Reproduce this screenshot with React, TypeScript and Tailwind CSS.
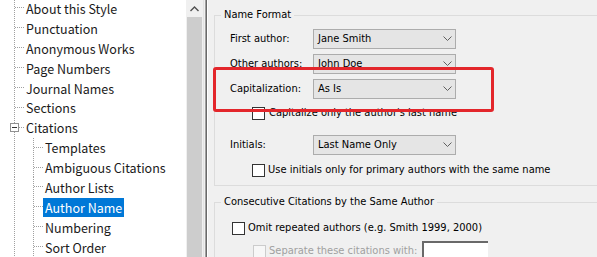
import React from "react";

const treeFont = { fontFamily: '"Noto Sans CJK SC", "Open Sans", sans-serif' };
const uiFont = { fontFamily: '"DejaVu Sans Condensed", "DejaVu Sans", Tahoma, sans-serif' };

type Node = { label: string; level: 0 | 1; expander?: boolean; selected?: boolean };

const nodes: Node[] = [
  { label: "About this Style", level: 0 },
  { label: "Punctuation", level: 0 },
  { label: "Anonymous Works", level: 0 },
  { label: "Page Numbers", level: 0 },
  { label: "Journal Names", level: 0 },
  { label: "Sections", level: 0 },
  { label: "Citations", level: 0, expander: true },
  { label: "Templates", level: 1 },
  { label: "Ambiguous Citations", level: 1 },
  { label: "Author Lists", level: 1 },
  { label: "Author Name", level: 1, selected: true },
  { label: "Numbering", level: 1 },
  { label: "Sort Order", level: 1 },
];

const Connector = ({ node }: { node: Node }) => {
  const w = node.level === 0 ? 24 : 43;
  return (
    <svg width={w} height={20} className="shrink-0" shapeRendering="crispEdges">
      <line x1={14.5} y1={0} x2={14.5} y2={20} stroke="#a0a0a0" strokeDasharray="1 1" />
      {node.level === 0 && (
        <line x1={node.expander ? 19 : 15} y1={9.5} x2={25} y2={9.5} stroke="#a0a0a0" strokeDasharray="1 1" />
      )}
      {node.level === 1 && (
        <>
          <line x1={33.5} y1={0} x2={33.5} y2={20} stroke="#a0a0a0" strokeDasharray="1 1" />
          <line x1={34} y1={9.5} x2={43} y2={9.5} stroke="#a0a0a0" strokeDasharray="1 1" />
        </>
      )}
      {node.expander && (
        <>
          <rect x={10.5} y={5.5} width={8} height={8} fill="#fff" stroke="#919191" />
          <line x1={12} y1={9.5} x2={17} y2={9.5} stroke="#333" />
        </>
      )}
    </svg>
  );
};

const Dropdown = ({ value }: { value: string }) => (
  <div className="flex h-[20px] w-[143px] items-center justify-between border border-[#acacac] bg-[#e5e5e5] pl-[4px] pr-[3px] text-[11px] text-black">
    <span>{value}</span>
    <svg width="9" height="6" viewBox="0 0 9 6">
      <path d="M0.5 0.5 L4.5 4.5 L8.5 0.5" fill="none" stroke="#606060" strokeWidth="1" />
    </svg>
  </div>
);

const Checkbox = ({ disabled }: { disabled?: boolean }) => (
  <span
    className={`inline-block h-[13px] w-[13px] shrink-0 border ${disabled ? "border-[#cccccc] bg-[#f7f7f7]" : "border-[#333333] bg-white"}`}
  />
);

const FieldRow = ({ label, value }: { label: string; value: string }) => (
  <div className="flex items-center">
    <span className="w-[83px] text-[11px] text-black">{label}</span>
    <Dropdown value={value} />
  </div>
);

export default function App() {
  return (
    <div className="flex h-[257px] w-[597px] overflow-hidden bg-[#f0f0f0]">
      {/* tree */}
      <div className="w-[186px] shrink-0 overflow-hidden bg-white text-[12.5px] text-[#1a1a1a]" style={treeFont}>
        <div className="-mt-[1.5px]">
          {nodes.map((n) => (
            <div key={n.label} className="flex h-[19.9px] items-center">
              <Connector node={n} />
              <span
                className={`whitespace-nowrap px-[2px] leading-[19px] ${n.selected ? "bg-[#0078d7] text-white" : ""}`}
              >
                {n.label}
              </span>
            </div>
          ))}
        </div>
      </div>

      {/* scrollbar */}
      <div className="flex w-[17px] shrink-0 flex-col bg-[#f0f0f0]">
        <div className="flex h-[17px] items-center justify-center">
          <svg width="9" height="6" viewBox="0 0 9 6">
            <path d="M0.5 5 L4.5 1 L8.5 5" fill="none" stroke="#505050" strokeWidth="1.4" />
          </svg>
        </div>
        <div className="mx-[1px] flex-1 bg-[#cdcdcd]" />
      </div>

      {/* splitter */}
      <div className="flex w-[5px] shrink-0">
        <div className="w-[1px] bg-[#e3e3e3]" />
        <div className="w-[1px] bg-[#f0f0f0]" />
        <div className="w-[1px] bg-[#a0a0a0]" />
        <div className="w-[1px] bg-[#696969]" />
        <div className="w-[1px] bg-white" />
      </div>

      {/* settings */}
      <div className="relative flex-1 bg-[#f0f0f0] text-[11px] text-black" style={uiFont}>
        <fieldset className="ml-[6px] mt-[8px] w-[420px] border border-[#dcdcdc] pb-[8px] pl-[15px]">
          <legend className="-ml-[9px] px-[3px] leading-[14px]">Name Format</legend>
          <div className="mt-[7px] flex flex-col gap-[5px]">
            <FieldRow label="First author:" value="Jane Smith" />
            <FieldRow label="Other authors:" value="John Doe" />
            <FieldRow label="Capitalization:" value="As Is" />
          </div>
          <label className="ml-[22px] mt-[7px] flex h-[14px] items-center gap-[4px]">
            <Checkbox />
            <span>Capitalize only the author's last name</span>
          </label>
          <div className="mt-[15px]">
            <FieldRow label="Initials:" value="Last Name Only" />
          </div>
          <label className="ml-[22px] mt-[8px] flex h-[14px] items-center gap-[3px]">
            <Checkbox />
            <span>Use initials only for primary authors with the same name</span>
          </label>
        </fieldset>

        <fieldset className="ml-[6px] mt-[9px] w-[420px] border border-[#dcdcdc] pl-[17px]">
          <legend className="-ml-[11px] px-[3px] leading-[14px]">Consecutive Citations by the Same Author</legend>
          <label className="mt-[12px] flex h-[14px] items-center gap-[3px]">
            <Checkbox />
            <span>Omit repeated authors (e.g. Smith 1999, 2000)</span>
          </label>
          <div className="ml-[21px] mt-[9px] flex h-[14px] items-center gap-[3px] text-[#a0a0a0]">
            <Checkbox disabled />
            <span className="w-[150px]">Separate these citations with:</span>
            <div className="h-[20px] w-[66px] border-l-2 border-t-2 border-l-[#696969] border-t-[#696969] bg-white" />
          </div>
        </fieldset>

        {/* red highlight */}
        <div className="pointer-events-none absolute left-[5px] top-[67px] h-[45px] w-[281px] rounded-[3px] border-[3px] border-[#e3262b]" />
      </div>
    </div>
  );
}
